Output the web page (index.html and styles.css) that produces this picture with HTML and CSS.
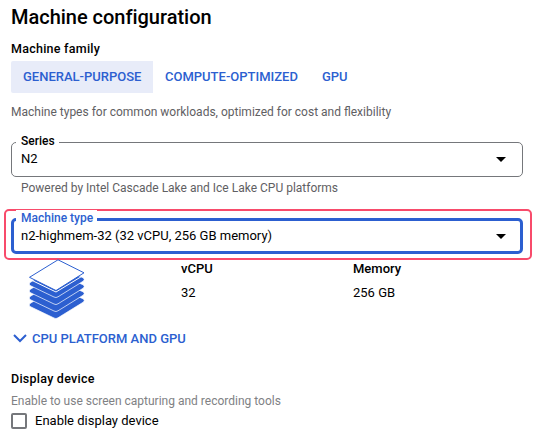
FILE: index.html
```html
<!DOCTYPE html>
<html lang="en">
<head>
<meta charset="utf-8">
<title>Machine configuration</title>
<link rel="stylesheet" href="styles.css">
</head>
<body>
<main class="page">
  <h1 class="title">Machine configuration</h1>
  <h2 class="heading family">Machine family</h2>
  <nav class="tabs">
    <a class="tab active">GENERAL-PURPOSE</a>
    <a class="tab">COMPUTE-OPTIMIZED</a>
    <a class="tab">GPU</a>
  </nav>
  <p class="description">Machine types for common workloads, optimized for cost and flexibility</p>
  <div class="field">
    <span class="label">Series</span>
    <span class="value">N2</span>
    <svg class="arrow" viewBox="0 0 10 5"><path d="M0 0h10L5 5z"/></svg>
  </div>
  <p class="hint">Powered by Intel Cascade Lake and Ice Lake CPU platforms</p>
  <div class="highlight">
    <div class="field focused">
      <span class="label">Machine type</span>
      <span class="value">n2-highmem-32 (32 vCPU, 256 GB memory)</span>
      <svg class="arrow" viewBox="0 0 10 5"><path d="M0 0h10L5 5z"/></svg>
    </div>
  </div>
  <section class="specs">
    <svg class="stack" viewBox="0 0 58 60">
      <g class="layers">
        <path d="M2 44.500L29 28l26.500 12q1.500 1.500 0 3L30 58.800q-2 1.400-4 .2L2 47.500q-1.600-1.500 0-3z"/>
        <path d="M2 37.500L29 21l26.500 12q1.500 1.500 0 3L30 51.800q-2 1.400-4 .2L2 40.500q-1.600-1.500 0-3z"/>
        <path d="M2 30.500L29 14l26.500 12q1.500 1.500 0 3L30 44.800q-2 1.400-4 .2L2 33.500q-1.600-1.500 0-3z"/>
        <path d="M2 23.500L29 7l26.500 12q1.500 1.500 0 3L30 37.800q-2 1.400-4 .2L2 26.500q-1.600-1.500 0-3z"/>
      </g>
      <path class="gap" d="M1 20L28 33 56 16"/>
      <path class="sheet" d="M1.500 18.300L28 31.500 56 13.800 30 .8z"/>
    </svg>
    <dl class="spec"><dt>vCPU</dt><dd>32</dd></dl>
    <dl class="spec"><dt>Memory</dt><dd>256 GB</dd></dl>
  </section>
  <a class="expander">
    <svg class="chevron" viewBox="0 0 14 9"><path d="M1 1l6 6 6-6"/></svg>
    <span>CPU PLATFORM AND GPU</span>
  </a>
  <h2 class="heading display">Display device</h2>
  <p class="note">Enable to use screen capturing and recording tools</p>
  <label class="check"><span class="box"></span><span class="check-text">Enable display device</span></label>
</main>
</body>
</html>
```
FILE: styles.css
```css
* { box-sizing: border-box; }
body { margin: 0; background: #fff; color: #000; font-family: Roboto, "Liberation Sans", sans-serif; font-size: 13px; }
h1, h2, p, dl, dd { margin: 0; }
.page { width: 545px; height: 439px; padding: 5px 22px 0 11px; overflow: hidden; white-space: nowrap; }
.title { font-size: 20px; line-height: 24px; font-weight: 500; letter-spacing: -.02px; }
.heading { font-size: 12.5px; line-height: 16px; font-weight: 500; letter-spacing: .25px; }
.family { margin-top: 12px; }
.tabs { display: flex; margin-top: 4px; height: 32px; }
.tab { padding: 0 12px; line-height: 31px; font-weight: 500; color: #2c5fd0; }
.active { width: 142px; background: #e8ecf9; border-radius: 2px 0 0 2px; }
.description { margin-top: 11px; font-size: 12px; line-height: 16px; color: #5f6063; }
.field { position: relative; display: flex; align-items: center; justify-content: space-between; width: 512px; height: 35px; margin-top: 22px; padding: 0 16px 0 9px; border: 1px solid #75777b; border-radius: 5px; }
.label { position: absolute; top: -10px; left: 4px; padding: 0 4px 0 5px; background: #fff; font-size: 12px; line-height: 16px; font-weight: 500; }
.value { font-size: 13px; line-height: 16px; margin-top: -1px; }
.arrow { width: 10px; height: 5px; }
.hint { margin: 3px 0 0 10px; font-size: 12px; line-height: 16px; color: #5f6063; }
.highlight { width: 528px; height: 51px; margin: 13px 0 0 -7px; padding: 7px 6px 6px; border: 2px solid #f84b6b; border-radius: 5px; }
.focused { height: 36px; margin: 0 0 0 -1px; padding: 0 14px 0 7px; border: 3px solid #2c5fd0; }
.focused .label { top: -11px; left: 2px; color: #2c5fd0; }
.specs { display: grid; grid-template-columns: 170px 172px 1fr; height: 60px; margin-top: -1px; }
.stack { width: 58px; height: 60px; margin-left: 17px; }
.layers { fill: #2c5fd0; stroke: #fff; stroke-width: .7; }
.gap { fill: none; stroke: #fff; stroke-width: 1; }
.sheet { fill: #fff; stroke: #2c5fd0; stroke-width: 1; stroke-linejoin: round; }
.spec dt { height: 22px; line-height: 19px; font-weight: 500; }
.spec dd { line-height: 24px; }
.expander { display: flex; align-items: center; height: 20px; margin: 9px 0 0 2px; color: #2c5fd0; font-weight: 500; }
.chevron { width: 14px; height: 9px; margin-right: 5px; fill: none; stroke: #2c5fd0; stroke-width: 2; }
.display { margin-top: 23px; }
.note { margin-top: 6px; font-size: 12px; line-height: 16px; color: #808184; }
.check { display: flex; align-items: center; gap: 8px; height: 16px; margin-top: 4px; }
.check-text { margin-top: -1px; }
.box { width: 16px; height: 16px; border: 2px solid #75777b; border-radius: 2px; }
```
